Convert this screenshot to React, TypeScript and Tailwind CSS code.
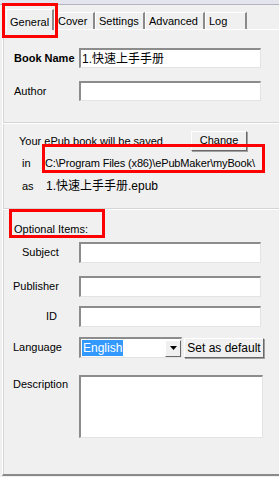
import React from "react";

const font = { fontFamily: '"Liberation Sans", "Noto Sans CJK SC", Arial, sans-serif' };

function Input({ w = "w-[182px]", h = "h-[20px]", children }: { w?: string; h?: string; children?: React.ReactNode }) {
  return (
    <div className={`${w} ${h} border-t-2 border-l-2 border-t-[#8c8c8c] border-l-[#8c8c8c] border-b border-r border-b-[#e3e3e3] border-r-[#e3e3e3] bg-white flex items-center pl-[1px] text-[12px] leading-none text-black overflow-hidden whitespace-nowrap`}>
      {children}
    </div>
  );
}

function Button({ className = "", children }: { className?: string; children: React.ReactNode }) {
  return (
    <div className={`${className} bg-[#f0f0f0] border border-t-white border-l-white border-r-[#696969] border-b-[#696969] shadow-[1px_1px_0_#a0a0a0] flex items-center justify-center text-[11px] text-black whitespace-nowrap`}>
      {children}
    </div>
  );
}

function Tab({ label, className = "" }: { label: string; className?: string }) {
  return (
    <div className={`${className} h-[17px] mt-[3px] border-t border-l border-t-white border-l-white border-r-2 border-r-[#8a8a8a] flex items-center pl-[3px] text-[11px] text-black whitespace-nowrap`}>
      {label}
    </div>
  );
}

export default function App() {
  return (
    <div className="w-[279px] h-[477px] bg-[#f0f0f0] relative overflow-hidden text-[11px]" style={font}>
      {/* top strip */}
      <div className="h-[4px] bg-[#e4e4ee]" />
      <div className="h-[1px] bg-[#b4b4bc]" />
      {/* tabs */}
      <div className="flex items-end h-[22px] ml-[6px] mt-[2px]">
        <div className="w-[48px] h-[21px] border-t border-l border-t-white border-l-white border-r-2 border-r-[#8a8a8a] flex items-start pt-[4px] pl-[3px] text-[11px] text-black bg-[#f0f0f0] relative z-10 -mb-[1px]">
          General
        </div>
        <Tab label="Cover" className="w-[41px]" />
        <Tab label="Settings" className="w-[50px]" />
        <Tab label="Advanced" className="w-[60px]" />
        <Tab label="Log" className="w-[42px]" />
      </div>
      {/* panel */}
      <div className="ml-[2px] w-[290px] h-[447px] border-t border-l border-t-white border-l-white border-b-2 border-b-[#8a8a8a] relative">
        <div className="absolute inset-0 border-l border-[#d8d8d8]" />
        <div className="relative flex flex-col">
          {/* Book Name */}
          <div className="flex items-center mt-[18px] h-[20px]">
            <div className="w-[76px] pl-[11px] font-bold text-[11px] text-black whitespace-nowrap">Book Name</div>
            <Input>1.快速上手手册</Input>
          </div>
          {/* Author */}
          <div className="flex items-center mt-[13px] h-[20px]">
            <div className="w-[76px] pl-[11px] text-black">Author</div>
            <Input />
          </div>
          {/* separator */}
          <div className="mt-[21px] h-[1px] bg-[#d4d4d4]" />
          <div className="h-[1px] bg-white" />
          {/* saved */}
          <div className="flex items-center mt-[6px] h-[21px]">
            <div className="w-[188px] pl-[16px] pt-[2px] text-black whitespace-nowrap">Your ePub book will be saved</div>
            <Button className="w-[56px] h-[20px] pb-[1px]">Change</Button>
          </div>
          <div className="flex items-center mt-[3px] h-[18px] text-[11px] text-black">
            <div className="w-[42px] pl-[19px]">in</div>
            <div className="whitespace-nowrap tracking-[-0.15px]">C:\Program Files (x86)\ePubMaker\myBook\</div>
          </div>
          <div className="flex items-center mt-[5px] h-[18px] text-[11px] text-black">
            <div className="w-[43px] pl-[19px]">as</div>
            <div className="whitespace-nowrap text-[12px]">1.快速上手手册.epub</div>
          </div>
          {/* separator */}
          <div className="mt-[13px] h-[1px] bg-[#d4d4d4]" />
          <div className="h-[1px] bg-white" />
          <div className="mt-[11px] h-[16px] pl-[11px] text-black flex items-center whitespace-nowrap">Optional Items:</div>
          {/* Subject */}
          <div className="flex items-center mt-[5px] h-[21px]">
            <div className="w-[76px] pl-[19px] text-black">Subject</div>
            <Input h="h-[21px]" />
          </div>
          <div className="flex items-center mt-[13px] h-[21px]">
            <div className="w-[76px] pl-[10px] text-black">Publisher</div>
            <Input h="h-[21px]" />
          </div>
          <div className="flex items-center mt-[9px] h-[21px]">
            <div className="w-[76px] pl-[43px] text-black">ID</div>
            <Input h="h-[21px]" />
          </div>
          {/* Language */}
          <div className="flex items-center mt-[10px] h-[21px]">
            <div className="w-[76px] pl-[10px] text-black">Language</div>
            <div className="w-[103px] h-[21px] border-t-2 border-l-2 border-t-[#8c8c8c] border-l-[#8c8c8c] border-b border-r border-b-[#e3e3e3] border-r-[#e3e3e3] bg-white flex items-center">
              <div className="ml-[1px] h-[16px] px-[1px] bg-[#3399ff] text-white text-[12px] flex items-center">English</div>
              <div className="flex-1" />
              <div className="w-[16px] h-[17px] bg-[#f0f0f0] border border-t-white border-l-white border-r-[#696969] border-b-[#696969] flex items-center justify-center">
                <svg width="7" height="4" viewBox="0 0 7 4"><path d="M0 0h7L3.5 4z" fill="#000" /></svg>
              </div>
            </div>
            <Button className="ml-[2px] w-[80px] h-[20px] text-[12px]">Set as default</Button>
          </div>
          {/* Description */}
          <div className="flex items-start mt-[17px]">
            <div className="w-[76px] pl-[10px] pt-[1px] text-black">Description</div>
            <Input w="w-[184px]" h="h-[63px]" />
          </div>
        </div>
      </div>

      {/* red annotation boxes */}
      <div className="absolute left-[2px] top-[3px] w-[56px] h-[35px] border-[3px] border-[#ff0000] pointer-events-none" />
      <div className="absolute left-[42px] top-[144px] w-[223px] h-[29px] border-[3px] border-[#ff0000] pointer-events-none" />
      <div className="absolute left-[9px] top-[209px] w-[96px] h-[29px] border-[3px] border-[#ff0000] pointer-events-none" />
    </div>
  );
}
